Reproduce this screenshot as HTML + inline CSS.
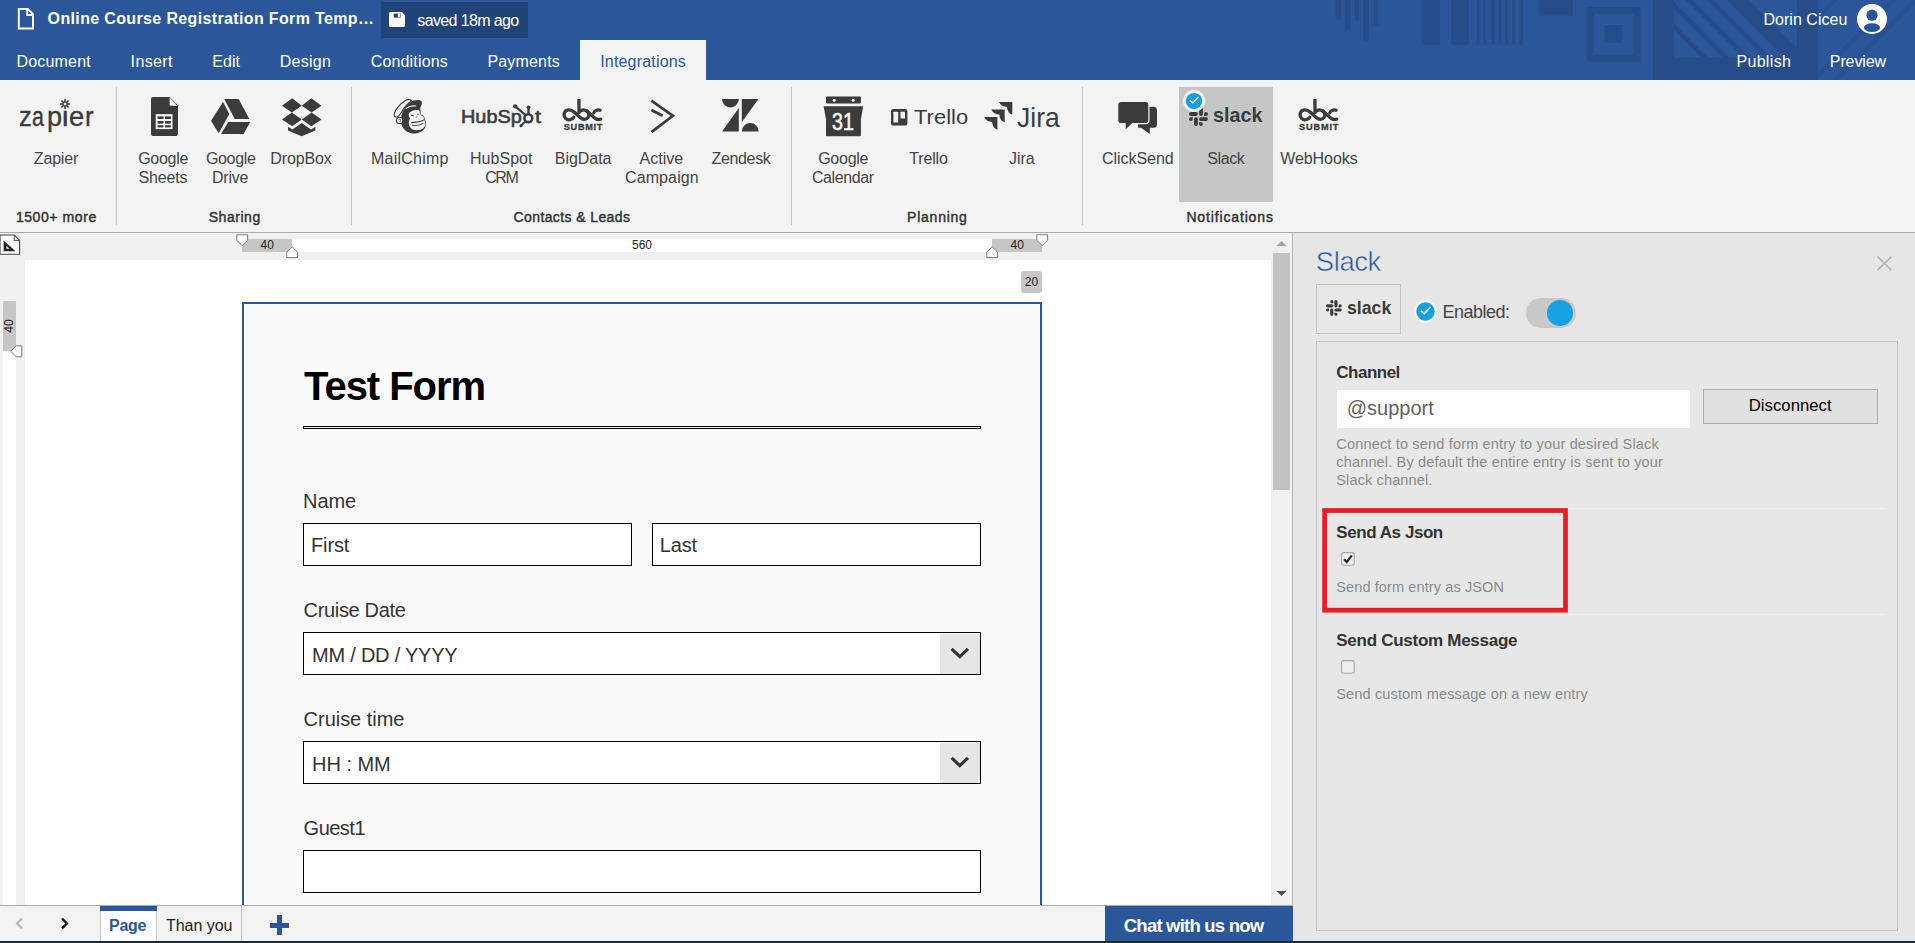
<!DOCTYPE html><html><head><meta charset="utf-8"><title>Form builder</title><style>
*{box-sizing:border-box;margin:0;padding:0}
html,body{width:1915px;height:943px;overflow:hidden;background:#f3f3f3;font-family:"Liberation Sans",sans-serif;}
.a{position:absolute}
.t{position:absolute;white-space:nowrap;line-height:1;}
svg{position:absolute;overflow:visible}
#hdr{left:0;top:0;width:1915px;height:80px;background:#2b579a;overflow:hidden}
#ribbon{left:0;top:80px;width:1915px;height:152px;background:#f3f3f3}
.sep{position:absolute;top:87px;width:1px;height:138px;background:#c4c4c4}
.ctr{position:absolute;white-space:nowrap;line-height:1;transform:translate(-50%,-50%);font-size:12px;color:#222}
</style></head><body>
<div id="hdr" class="a"><svg style="left:0;top:0" width="1915" height="80" viewBox="0 0 1915 80"><rect x="1335.7" y="0" width="5.4" height="19.6" fill="#264d8a"/><rect x="1345" y="0" width="5.5" height="29.5" fill="#264d8a"/><rect x="1354.5" y="0" width="4.5" height="20.4" fill="#264d8a"/><rect x="1363" y="0" width="6.0" height="40.7" fill="#264d8a"/><rect x="1373.7" y="0" width="4.6" height="24.8" fill="#264d8a"/><rect x="1421.5" y="0" width="18.4" height="44.6" fill="#264d8a"/><rect x="1451" y="0" width="17.8" height="44.6" fill="#264d8a"/><rect x="1476.7" y="0" width="3.0" height="44.6" fill="#264d8a"/><rect x="1483" y="0" width="3.0" height="44.6" fill="#264d8a"/><rect x="1490.8" y="0" width="3.9" height="44.6" fill="#264d8a"/><rect x="1498.6" y="0" width="3.1" height="44.6" fill="#264d8a"/><rect x="1504.9" y="0" width="3.1" height="44.6" fill="#264d8a"/><rect x="1512" y="0" width="3.0" height="44.6" fill="#264d8a"/><rect x="1519.3" y="0" width="3.6" height="44.6" fill="#264d8a"/><rect x="1538.5" y="0" width="34.5" height="15.7" fill="#264d8a"/><rect x="1586.5" y="7.2" width="54" height="54.5" fill="#264d8a"/><rect x="1593.5" y="14.2" width="40" height="40.5" fill="#2b579a"/><rect x="1604.4" y="25" width="17.8" height="17.6" fill="#264d8a"/><rect x="1653" y="0" width="165" height="80" fill="#264d8a"/><clipPath id="cpd"><rect x="1673.7" y="0" width="123" height="57.5"/></clipPath><g clip-path="url(#cpd)"><polygon points="1490,-10 1634,-10 1734,90 1590,90" fill="#2b579a"/><polygon points="1640.9,-10 1654.8,-10 1754.8,90 1740.9,90" fill="#2b579a"/><polygon points="1661.7,-10 1675.6,-10 1775.6,90 1761.7,90" fill="#2b579a"/><polygon points="1682.6,-10 1696.5,-10 1796.5,90 1782.6,90" fill="#2b579a"/><polygon points="1703.4,-10 1717.3,-10 1817.3,90 1803.4,90" fill="#2b579a"/><polygon points="1739,-10 1890,-10 1990,90 1839,90" fill="#2b579a"/></g><clipPath id="cpe"><rect x="1818" y="0" width="97" height="80"/></clipPath><g clip-path="url(#cpe)" opacity="0.55"><polygon points="1842,-10 1848,-10 1748,90 1742,90" fill="#264d8a"/><polygon points="1900,-10 1907,-10 1807,90 1800,90" fill="#264d8a"/><polygon points="1922,-10 1929,-10 1829,90 1822,90" fill="#264d8a"/></g></svg></div>
<div class="a" style="left:381px;top:2px;width:147px;height:36px;background:#214478"></div>
<div class="a" style="left:580px;top:40px;width:126px;height:40px;background:#f3f3f3"></div>
<div id="ribbon" class="a"></div>
<div class="a" style="left:0;top:232px;width:1915px;height:1px;background:#ababab"></div>
<div class="sep" style="left:116px"></div>
<div class="sep" style="left:351px"></div>
<div class="sep" style="left:791px"></div>
<div class="sep" style="left:1082px"></div>
<div class="a" style="left:1179px;top:87px;width:94px;height:115px;background:#c6c6c6"></div>
<div class="a" style="left:0;top:233px;width:1293px;height:673px;background:#f1f1f1"></div>
<div class="a" style="left:25px;top:260px;width:1246px;height:646px;background:#ffffff"></div>
<div class="a" style="left:242px;top:239px;width:800px;height:13px;background:#ffffff"></div>
<div class="a" style="left:242px;top:239px;width:50px;height:13px;background:#c6c6c6"></div>
<div class="a" style="left:992px;top:239px;width:50px;height:13px;background:#c6c6c6"></div>
<div class="a" style="left:2.5px;top:301px;width:13.5px;height:605px;background:#ffffff"></div>
<div class="a" style="left:2.5px;top:301px;width:13.5px;height:50px;background:#c6c6c6"></div>
<span class="ctr" style="left:267.2px;top:245px">40</span>
<span class="ctr" style="left:642px;top:245px">560</span>
<span class="ctr" style="left:1017.2px;top:245px">40</span>
<span class="ctr" style="left:8.8px;top:325.9px;transform:translate(-50%,-50%) rotate(-90deg)">40</span>
<div class="a" style="left:1021px;top:271px;width:21px;height:21.5px;background:#c6c6c6;border-radius:3px"></div>
<span class="ctr" style="left:1031.5px;top:282.2px">20</span>
<svg style="left:236px;top:234px" width="13" height="13" viewBox="0 0 13 13"><path d="M0.8 0.8 H11.6 V6.2 L6.2 11.8 L0.8 6.2 Z" fill="#fff" stroke="#7a7a7a" stroke-width="1"/></svg><svg style="left:1035.6px;top:234px" width="13" height="13" viewBox="0 0 13 13"><path d="M0.8 0.8 H11.6 V6.2 L6.2 11.8 L0.8 6.2 Z" fill="#fff" stroke="#7a7a7a" stroke-width="1"/></svg><svg style="left:285.8px;top:246px" width="13" height="13" viewBox="0 0 13 13"><path d="M0.8 11.6 H11.6 V6.2 L6.2 0.8 L0.8 6.2 Z" fill="#fff" stroke="#7a7a7a" stroke-width="1"/></svg><svg style="left:985.8px;top:246px" width="13" height="13" viewBox="0 0 13 13"><path d="M0.8 11.6 H11.6 V6.2 L6.2 0.8 L0.8 6.2 Z" fill="#fff" stroke="#7a7a7a" stroke-width="1"/></svg><svg style="left:9.5px;top:344.5px" width="13" height="13" viewBox="0 0 13 13"><path d="M11.8 0.8 V11.8 H6.2 L0.8 6.3 L6.2 0.8 Z" fill="#fff" stroke="#7a7a7a" stroke-width="1"/></svg><svg style="left:0;top:234px" width="21" height="21" viewBox="0 0 21 21"><path d="M0 1 H14.2 L19.6 6.4 V20.2 H0 Z" fill="#fff" stroke="#444" stroke-width="1.1"/><path d="M14.2 1 V6.4 H19.6" fill="none" stroke="#444" stroke-width="1"/><path d="M3.6 6.4 L15.6 17.2 H3.6 Z" fill="#222"/><path d="M6.4 12 L9.6 14.8 H6.4 Z" fill="#fff"/></svg>
<div class="a" style="left:242px;top:302px;width:800px;height:620px;background:#fafafa;border:2.2px solid #2b579a"></div>
<div class="a" style="left:303px;top:425.6px;width:678px;height:3.75px;background:#000"></div>
<div class="a" style="left:304.2px;top:426.85px;width:675.6px;height:1.25px;background:#fafafa"></div>
<div class="a" style="left:303.2px;top:523.2px;width:329px;height:42.8px;background:#fff;border:1.25px solid #000"></div>
<div class="a" style="left:652.2px;top:523.2px;width:329px;height:42.8px;background:#fff;border:1.25px solid #000"></div>
<div class="a" style="left:303.2px;top:632.3px;width:678px;height:42.8px;background:#fff;border:1.25px solid #000"></div>
<div class="a" style="left:303.2px;top:741.3px;width:678px;height:42.8px;background:#fff;border:1.25px solid #000"></div>
<div class="a" style="left:303.2px;top:850.3px;width:678px;height:42.8px;background:#fff;border:1.25px solid #000"></div>
<div class="a" style="left:939.7px;top:633.55px;width:40.2px;height:40.3px;background:#e6e6e6"></div>
<svg style="left:949px;top:646.3px" width="22" height="14" viewBox="0 0 22 14"><path d="M2.6 2.8 L10.8 10.6 L19 2.8" fill="none" stroke="#333" stroke-width="3.1"/></svg>
<div class="a" style="left:939.7px;top:742.55px;width:40.2px;height:40.3px;background:#e6e6e6"></div>
<svg style="left:949px;top:755.3px" width="22" height="14" viewBox="0 0 22 14"><path d="M2.6 2.8 L10.8 10.6 L19 2.8" fill="none" stroke="#333" stroke-width="3.1"/></svg>
<div class="a" style="left:1271px;top:233px;width:21px;height:673px;background:#f1f1f1"></div>
<div class="a" style="left:1273px;top:253px;width:17px;height:237px;background:#c1c1c1"></div>
<svg style="left:1276px;top:240px" width="11" height="7" viewBox="0 0 11 7"><path d="M0.5 6 L5.5 1 L10.5 6 Z" fill="#a3a3a3"/></svg>
<svg style="left:1276px;top:890px" width="11" height="7" viewBox="0 0 11 7"><path d="M0.5 1 L5.5 6 L10.5 1 Z" fill="#505050"/></svg>
<div class="a" style="left:0;top:905px;width:1293px;height:36px;background:#f3f3f3;border-top:1px solid #ababab"></div>
<div class="a" style="left:100px;top:906px;width:57px;height:35px;background:#fff;border-left:1px solid #c6c6c6;border-right:1px solid #c6c6c6"></div>
<div class="a" style="left:100px;top:906px;width:57px;height:5px;background:#2b579a"></div>
<div class="a" style="left:241px;top:906px;width:1px;height:35px;background:#c6c6c6"></div>
<svg style="left:14px;top:916px" width="12" height="15" viewBox="14 916 12 15"><path d="M22 918.5 L17.1 923.45 L22 928.4" fill="none" stroke="#b9b9b9" stroke-width="2.3"/></svg>
<svg style="left:58px;top:916px" width="12" height="15" viewBox="58 916 12 15"><path d="M62 918.5 L66.9 923.45 L62 928.4" fill="none" stroke="#111" stroke-width="2.3"/></svg>
<div class="a" style="left:269.8px;top:922.5px;width:19.6px;height:5px;background:#2b579a"></div>
<div class="a" style="left:277.1px;top:915.4px;width:5px;height:19.2px;background:#2b579a"></div>
<div class="a" style="left:1292px;top:233px;width:623px;height:710px;background:#e6e6e6;border-left:1px solid #b5b5b5"></div>
<div class="a" style="left:1316px;top:284px;width:85px;height:49.5px;border:1px solid #c2c2c2;background:#e8e8e8"></div>
<div class="a" style="left:1316px;top:341px;width:582px;height:590px;border:1px solid #c2c2c2;background:#e7e7e7"></div>
<div class="a" style="left:1336.8px;top:390.2px;width:353.2px;height:37.5px;background:#fff"></div>
<div class="a" style="left:1703px;top:389px;width:175px;height:35px;background:#e1e1e1;border:1px solid #adadad"></div>
<div class="a" style="left:1336px;top:508.3px;width:550px;height:1px;background:#efefef"></div>
<div class="a" style="left:1336px;top:613.8px;width:550px;height:1px;background:#efefef"></div>
<svg style="left:1320px;top:506px" width="250" height="109" viewBox="1320 506 250 109"><rect x="1324.6" y="510.5" width="240.9" height="99.7" fill="none" stroke="#ea1c24" stroke-width="4.75"/></svg>
<div class="a" style="left:1525.8px;top:297.9px;width:50.1px;height:30.5px;border-radius:16px;background:#c9c9c9"></div>
<div class="a" style="left:1547.1px;top:300.1px;width:26px;height:26px;border-radius:13px;background:#15a1e3"></div>
<svg style="left:1326px;top:299.9px" width="15.8" height="15.8" viewBox="0 0 54 54"><path d="M19.712.133a5.381 5.381 0 0 0-5.376 5.387 5.381 5.381 0 0 0 5.376 5.386h5.376V5.52A5.381 5.381 0 0 0 19.712.133m0 14.365H5.376A5.381 5.381 0 0 0 0 19.884a5.381 5.381 0 0 0 5.376 5.387h14.336a5.381 5.381 0 0 0 5.376-5.387 5.381 5.381 0 0 0-5.376-5.386M53.76 19.884a5.381 5.381 0 0 0-5.376-5.386 5.381 5.381 0 0 0-5.376 5.386v5.387h5.376a5.381 5.381 0 0 0 5.376-5.387m-14.336 0V5.52A5.381 5.381 0 0 0 34.048.133a5.381 5.381 0 0 0-5.376 5.387v14.364a5.381 5.381 0 0 0 5.376 5.387 5.381 5.381 0 0 0 5.376-5.387M34.048 54a5.381 5.381 0 0 0 5.376-5.387 5.381 5.381 0 0 0-5.376-5.386h-5.376v5.386A5.381 5.381 0 0 0 34.048 54m0-14.365h14.336a5.381 5.381 0 0 0 5.376-5.386 5.381 5.381 0 0 0-5.376-5.387H34.048a5.381 5.381 0 0 0-5.376 5.387 5.381 5.381 0 0 0 5.376 5.386M0 34.249a5.381 5.381 0 0 0 5.376 5.386 5.381 5.381 0 0 0 5.376-5.386v-5.387H5.376A5.381 5.381 0 0 0 0 34.25m14.336-.001v14.364A5.381 5.381 0 0 0 19.712 54a5.381 5.381 0 0 0 5.376-5.387V34.25a5.381 5.381 0 0 0-5.376-5.387 5.381 5.381 0 0 0-5.376 5.387" fill="#3b3b3b"/></svg><svg style="left:1413.9px;top:299.6px" width="23.0" height="23.0" viewBox="-11.5 -11.5 23.0 23.0"><circle r="11.5" fill="#f6f6f6"/><circle r="9.2" fill="#14a0e3"/><path d="M-4.54 -0.57 L-1.25 2.16 L5.11 -4.43" fill="none" stroke="#fff" stroke-width="1.59"/></svg><svg style="left:1877px;top:256px" width="15" height="15" viewBox="0 0 15 15"><path d="M0.6 0.6 L14.4 14.2 M14.4 0.6 L0.6 14.2" stroke="#b4b4b4" stroke-width="1.7" fill="none"/></svg><svg style="left:1341px;top:552px" width="14" height="14" viewBox="0 0 14 14"><rect x="0.6" y="0.6" width="12.6" height="12.6" rx="2.2" fill="#efefef" stroke="#a6a6a6" stroke-width="1.1"/><path d="M3 7.2 L5.8 10 L10.8 3.4" fill="none" stroke="#2a2a2a" stroke-width="2.2"/></svg><svg style="left:1341px;top:660.3px" width="14" height="14" viewBox="0 0 14 14"><rect x="0.6" y="0.6" width="12.6" height="12.6" rx="2.2" fill="#efefef" stroke="#a6a6a6" stroke-width="1.1"/></svg>
<div class="a" style="left:1105.4px;top:905.5px;width:187.4px;height:35.5px;background:#2b579a"></div>
<div class="a" style="left:0;top:941px;width:1915px;height:2px;background:#1f2c38"></div>
<svg style="left:17px;top:8px" width="18" height="22" viewBox="0 0 18 22"><path d="M1.8 1.05 H10.9 L16 6.2 V20.5 H1.8 Z M10.2 1.4 V7 H15.8" fill="none" stroke="#fff" stroke-width="1.9" stroke-linejoin="miter"/></svg><svg style="left:389px;top:12px" width="16" height="15" viewBox="0 0 16 15"><path d="M1.5 0.1 H12.8 L16 3.2 V13.6 Q16 15 14.6 15 H1.5 Q0 15 0 13.6 V1.5 Q0 0.1 1.5 0.1 Z" fill="#fff"/><rect x="4.8" y="1.6" width="7" height="4" fill="#214478"/><rect x="8.9" y="1.6" width="2.5" height="3.4" fill="#fff"/></svg><svg style="left:1857px;top:4px" width="30" height="30" viewBox="0 0 30 30"><circle cx="15" cy="15" r="15" fill="#fff"/><circle cx="15" cy="11.2" r="5.6" fill="#2b579a"/><ellipse cx="15" cy="23.6" rx="8.2" ry="4.3" fill="#2b579a"/></svg>
<svg style="left:58.9px;top:97.8px" width="12" height="12" viewBox="-6 -6 12 12"><line x1="-5" y1="0" x2="5" y2="0" stroke="#3b3b3b" stroke-width="1.6" transform="rotate(0)"/><line x1="-5" y1="0" x2="5" y2="0" stroke="#3b3b3b" stroke-width="1.6" transform="rotate(45)"/><line x1="-5" y1="0" x2="5" y2="0" stroke="#3b3b3b" stroke-width="1.6" transform="rotate(90)"/><line x1="-5" y1="0" x2="5" y2="0" stroke="#3b3b3b" stroke-width="1.6" transform="rotate(135)"/><circle r="1.3" fill="#f3f3f3"/></svg><svg style="left:151px;top:96.8px" width="27" height="39" viewBox="0 0 27 39"><path d="M2 0 H18.6 L27 8.6 V37 Q27 39 25 39 H2 Q0 39 0 37 V2 Q0 0 2 0 Z" fill="#3b3b3b"/><path d="M18.6 0.6 L26.4 8.8 H20 Q18.6 8.8 18.6 7.4 Z" fill="#f3f3f3"/><rect x="4.7" y="17.1" width="16.8" height="15" fill="#f3f3f3"/><rect x="6.6" y="19.4" width="5.8" height="2.6" fill="#3b3b3b"/><rect x="6.6" y="24.0" width="5.8" height="2.6" fill="#3b3b3b"/><rect x="6.6" y="28.2" width="5.8" height="2.2" fill="#3b3b3b"/><rect x="14.0" y="19.4" width="5.8" height="2.6" fill="#3b3b3b"/><rect x="14.0" y="24.0" width="5.8" height="2.6" fill="#3b3b3b"/><rect x="14.0" y="28.2" width="5.8" height="2.2" fill="#3b3b3b"/></svg><svg style="left:210.9px;top:99px" width="40" height="35" viewBox="0 0 40 35"><polygon points="12.1,2.9 0,21.7 7.7,34.2 18.3,15.1" fill="#3b3b3b"/><polygon points="17.2,23 39.2,23 32.6,34.9 10.1,34.9" fill="#3b3b3b"/><polygon points="13.2,0 27.6,0 38.4,20.1 23.8,20.1" fill="#3b3b3b"/></svg><svg style="left:281.9px;top:97.9px" width="40" height="39" viewBox="0 0 40 39"><polygon points="0,7.8 10.2,0.3 19.7,7.8 9.9,14.6" fill="#3b3b3b"/><polygon points="19.7,7.8 29.3,0.3 39.5,7.8 29.6,14.6" fill="#3b3b3b"/><polygon points="0,21.5 9.9,14.6 19.7,21.5 10.2,28.3" fill="#3b3b3b"/><polygon points="19.7,21.5 29.6,14.6 39.5,21.5 29.3,28.3" fill="#3b3b3b"/><polygon points="6,28.8 10.4,31.4 19.7,25 29.1,31.4 33.4,28.8 33.4,32.5 19.7,38.2 6,32.5" fill="#3b3b3b"/></svg><svg style="left:380px;top:92px" width="60" height="48" viewBox="0 0 1179 943"><path d="M600,200 C660,160 760,140 810,175 C840,205 815,270 790,305 C795,360 800,420 810,445 C850,455 880,480 880,540 C910,580 915,640 885,700 C840,780 720,830 620,812 C520,795 440,720 425,640 C405,560 410,450 450,380 C490,300 540,240 600,200 Z" fill="#3b3b3b"/><path d="M565,430 C590,375 700,340 770,360 C790,400 790,440 815,465 C850,470 872,500 868,548 C900,590 900,650 868,695 C830,745 730,765 655,742 C600,722 560,660 565,590 C575,555 590,535 588,510 C570,490 560,460 565,430 Z" fill="#f3f3f3"/><path d="M278,455 C275,380 380,230 520,158 C560,138 600,140 618,178 C560,215 480,300 430,385 C400,430 380,470 340,490 C305,498 282,485 278,455 Z" fill="#f3f3f3" stroke="#3b3b3b" stroke-width="22" stroke-linejoin="round"/><circle cx="385" cy="558" r="62" fill="#f3f3f3" stroke="#3b3b3b" stroke-width="22"/><path d="M365,548 C375,520 412,528 405,560 C400,575 395,580 400,595" fill="none" stroke="#3b3b3b" stroke-width="14"/><path d="M612,603 C690,600 790,590 866,545" fill="none" stroke="#3b3b3b" stroke-width="24"/><path d="M628,655 C700,668 790,655 856,612" fill="none" stroke="#3b3b3b" stroke-width="18"/><path d="M608,458 L665,468" fill="none" stroke="#3b3b3b" stroke-width="22"/><circle cx="748" cy="436" r="14" fill="#3b3b3b"/><path d="M705,495 L735,490" fill="none" stroke="#3b3b3b" stroke-width="14"/><path d="M515,322 C560,285 620,265 700,275" fill="none" stroke="#f3f3f3" stroke-width="24" stroke-linecap="round"/></svg><svg style="left:380px;top:90px" width="180" height="52" viewBox="0 0 1915 553"><circle cx="1578" cy="300" r="42" fill="none" stroke="#3b3b3b" stroke-width="28"/><line x1="1580" y1="190" x2="1580" y2="258" stroke="#3b3b3b" stroke-width="24"/><circle cx="1580" cy="184" r="20" fill="#3b3b3b"/><line x1="1442" y1="178" x2="1546" y2="264" stroke="#3b3b3b" stroke-width="24"/><circle cx="1438" cy="174" r="23" fill="#3b3b3b"/><line x1="1503" y1="376" x2="1547" y2="334" stroke="#3b3b3b" stroke-width="22"/><circle cx="1500" cy="380" r="17" fill="#3b3b3b"/></svg><svg style="left:554px;top:92.2px" width="60" height="44" viewBox="0 0 1286 943"><path d="M 425,540 C 395,600 300,615 250,565 C 190,505 215,395 305,385 C 375,378 410,410 450,445 L 560,545 C 620,600 700,600 735,540 C 768,478 728,392 650,386 C 600,382 560,402 535,440" fill="none" stroke="#3b3b3b" stroke-width="70" stroke-linejoin="round" stroke-linecap="round"/><path d="M 535,150 L 535,440" fill="none" stroke="#3b3b3b" stroke-width="70" stroke-linejoin="round" stroke-linecap="butt"/><path d="M 700,402 L 860,548 C 900,585 950,608 1000,582" fill="none" stroke="#3b3b3b" stroke-width="70" stroke-linejoin="round" stroke-linecap="round"/><path d="M 990,390 C 940,368 875,394 852,446" fill="none" stroke="#3b3b3b" stroke-width="70" stroke-linejoin="round" stroke-linecap="round"/></svg><svg style="left:1290px;top:92px" width="60" height="44" viewBox="0 0 1286 943"><path d="M 425,540 C 395,600 300,615 250,565 C 190,505 215,395 305,385 C 375,378 410,410 450,445 L 560,545 C 620,600 700,600 735,540 C 768,478 728,392 650,386 C 600,382 560,402 535,440" fill="none" stroke="#3b3b3b" stroke-width="70" stroke-linejoin="round" stroke-linecap="round"/><path d="M 535,150 L 535,440" fill="none" stroke="#3b3b3b" stroke-width="70" stroke-linejoin="round" stroke-linecap="butt"/><path d="M 700,402 L 860,548 C 900,585 950,608 1000,582" fill="none" stroke="#3b3b3b" stroke-width="70" stroke-linejoin="round" stroke-linecap="round"/><path d="M 990,390 C 940,368 875,394 852,446" fill="none" stroke="#3b3b3b" stroke-width="70" stroke-linejoin="round" stroke-linecap="round"/></svg><svg style="left:640px;top:90px" width="50" height="52" viewBox="640 90 50 52"><path d="M651.4,100.6 L672.9,115.9 L651.4,132.2" fill="none" stroke="#3b3b3b" stroke-width="2.7" stroke-linejoin="miter"/><path d="M651.4,110.0 L662.6,115.7" fill="none" stroke="#3b3b3b" stroke-width="2.7"/></svg><svg style="left:722px;top:99px" width="37" height="33" viewBox="0 0 37 33"><path d="M0,0 H16.8 A8.4,8.4 0 0 1 0,0 Z" fill="#3b3b3b"/><polygon points="19.8,0 36.4,0 19.8,23.2" fill="#3b3b3b"/><polygon points="16.8,9 16.8,32.4 0,32.4" fill="#3b3b3b"/><path d="M19.8,32.4 A8.45,8.45 0 0 1 36.7,32.4 Z" fill="#3b3b3b"/></svg><svg style="left:820px;top:90px" width="50" height="52" viewBox="820 90 50 52"><rect x="826" y="96.5" width="34.9" height="7.1" rx="0.8" fill="#3b3b3b"/><circle cx="834.2" cy="100.2" r="1.5" fill="#f3f3f3"/><circle cx="853.2" cy="100.2" r="1.5" fill="#f3f3f3"/><path d="M823.6,106.2 H863.2 L860.9,119.2 V135.2 Q860.9,136.2 859.9,136.2 H827 Q826,136.2 826,135.2 V119.2 Z" fill="#3b3b3b"/></svg><svg style="left:891.1px;top:109px" width="16.4" height="16.6" viewBox="0 0 16.4 16.6"><rect width="16.4" height="16.6" rx="2.2" fill="#3b3b3b"/><rect x="2.4" y="2.7" width="4.8" height="10.9" rx="0.5" fill="#f3f3f3"/><rect x="9.5" y="2.7" width="4.5" height="6.8" rx="0.5" fill="#f3f3f3"/></svg><svg style="left:980px;top:95px" width="40" height="40" viewBox="980 95 40 40"><path d="M999.00,101.90 L1012.30,101.90 L1012.30,114.54 C1008.98,113.87 1007.25,110.55 1006.98,106.95 C1003.65,106.69 1000.33,105.23 999.00,101.90 Z" fill="#3b3b3b"/><path d="M991.30,109.40 L1004.70,109.40 L1004.70,122.13 C1001.35,121.46 999.61,118.11 999.34,114.49 C995.99,114.22 992.64,112.75 991.30,109.40 Z" fill="#3b3b3b"/><path d="M984.20,116.90 L997.40,116.90 L997.40,129.44 C994.10,128.78 992.38,125.48 992.12,121.92 C988.82,121.65 985.52,120.20 984.20,116.90 Z" fill="#3b3b3b"/></svg><svg style="left:1110px;top:95px" width="55" height="45" viewBox="1110 95 55 45"><path d="M1138,106.7 H1153.5 Q1157,106.7 1157,110.2 V124.3 Q1157,127.8 1153.5,127.8 H1149.8 V134 L1141,127.8 H1138 Z" fill="#3b3b3b"/><path d="M1121.2,101.3 H1145.4 Q1148.9,101.3 1148.9,104.8 V120.2 Q1148.9,123.7 1145.4,123.7 H1132.6 L1125.1,130.6 V123.7 H1121.2 Q1117.7,123.7 1117.7,120.2 V104.8 Q1117.7,101.3 1121.2,101.3 Z" fill="#3b3b3b" stroke="#f3f3f3" stroke-width="1.2"/></svg><svg style="left:1188.9px;top:106.6px" width="19" height="19" viewBox="0 0 54 54"><path d="M19.712.133a5.381 5.381 0 0 0-5.376 5.387 5.381 5.381 0 0 0 5.376 5.386h5.376V5.52A5.381 5.381 0 0 0 19.712.133m0 14.365H5.376A5.381 5.381 0 0 0 0 19.884a5.381 5.381 0 0 0 5.376 5.387h14.336a5.381 5.381 0 0 0 5.376-5.387 5.381 5.381 0 0 0-5.376-5.386M53.76 19.884a5.381 5.381 0 0 0-5.376-5.386 5.381 5.381 0 0 0-5.376 5.386v5.387h5.376a5.381 5.381 0 0 0 5.376-5.387m-14.336 0V5.52A5.381 5.381 0 0 0 34.048.133a5.381 5.381 0 0 0-5.376 5.387v14.364a5.381 5.381 0 0 0 5.376 5.387 5.381 5.381 0 0 0 5.376-5.387M34.048 54a5.381 5.381 0 0 0 5.376-5.387 5.381 5.381 0 0 0-5.376-5.386h-5.376v5.386A5.381 5.381 0 0 0 34.048 54m0-14.365h14.336a5.381 5.381 0 0 0 5.376-5.386 5.381 5.381 0 0 0-5.376-5.387H34.048a5.381 5.381 0 0 0-5.376 5.387 5.381 5.381 0 0 0 5.376 5.386M0 34.249a5.381 5.381 0 0 0 5.376 5.386 5.381 5.381 0 0 0 5.376-5.386v-5.387H5.376A5.381 5.381 0 0 0 0 34.25m14.336-.001v14.364A5.381 5.381 0 0 0 19.712 54a5.381 5.381 0 0 0 5.376-5.387V34.25a5.381 5.381 0 0 0-5.376-5.387 5.381 5.381 0 0 0-5.376 5.387" fill="#3b3b3b"/></svg><svg style="left:1182.6px;top:89.8px" width="22" height="22" viewBox="-11 -11 22 22"><circle r="11" fill="#f6f6f6"/><circle r="8.1" fill="#14a0e3"/><path d="M-4.00 -0.50 L-1.10 1.90 L4.50 -3.90" fill="none" stroke="#fff" stroke-width="1.40"/></svg>
<span class="t" style="left:47.60px;top:11px;font-size:16px;letter-spacing:0.358px;color:#ffffff;font-weight:700;">Online Course Registration Form Temp…</span>
<span class="t" style="left:417.30px;top:13px;font-size:16px;letter-spacing:-0.634px;color:#ffffff;">saved 18m ago</span>
<span class="t" style="left:16.50px;top:54px;font-size:16px;letter-spacing:0.189px;color:#ffffff;">Document</span>
<span class="t" style="left:130.60px;top:54px;font-size:16px;letter-spacing:0.366px;color:#ffffff;">Insert</span>
<span class="t" style="left:212.20px;top:54px;font-size:16px;letter-spacing:0.092px;color:#ffffff;">Edit</span>
<span class="t" style="left:279.80px;top:54px;font-size:16px;letter-spacing:0.259px;color:#ffffff;">Design</span>
<span class="t" style="left:370.70px;top:54px;font-size:16px;letter-spacing:0.166px;color:#ffffff;">Conditions</span>
<span class="t" style="left:487.40px;top:54px;font-size:16px;letter-spacing:0.180px;color:#ffffff;">Payments</span>
<span class="t" style="left:600.20px;top:54px;font-size:16px;letter-spacing:0.181px;color:#2b579a;">Integrations</span>
<span class="t" style="left:1763.40px;top:12px;font-size:16px;letter-spacing:0.041px;color:#ffffff;">Dorin Ciceu</span>
<span class="t" style="left:1736.40px;top:54px;font-size:16px;letter-spacing:0.337px;color:#ffffff;">Publish</span>
<span class="t" style="left:1829.80px;top:54px;font-size:16px;letter-spacing:-0.092px;color:#ffffff;">Preview</span>
<span class="t" style="left:33.80px;top:151px;font-size:16px;letter-spacing:-0.165px;color:#444444;">Zapier</span>
<span class="t" style="left:138.20px;top:151px;font-size:16px;letter-spacing:-0.299px;color:#444444;">Google</span>
<span class="t" style="left:138.60px;top:170px;font-size:16px;letter-spacing:-0.202px;color:#444444;">Sheets</span>
<span class="t" style="left:205.90px;top:151px;font-size:16px;letter-spacing:-0.319px;color:#444444;">Google</span>
<span class="t" style="left:212.00px;top:170px;font-size:16px;letter-spacing:-0.234px;color:#444444;">Drive</span>
<span class="t" style="left:270.30px;top:151px;font-size:16px;letter-spacing:-0.125px;color:#444444;">DropBox</span>
<span class="t" style="left:371.00px;top:151px;font-size:16px;letter-spacing:0.229px;color:#444444;">MailChimp</span>
<span class="t" style="left:470.00px;top:151px;font-size:16px;letter-spacing:0.030px;color:#444444;">HubSpot</span>
<span class="t" style="left:485.20px;top:170px;font-size:16px;letter-spacing:-1.405px;color:#444444;">CRM</span>
<span class="t" style="left:554.80px;top:151px;font-size:16px;letter-spacing:-0.037px;color:#444444;">BigData</span>
<span class="t" style="left:639.60px;top:151px;font-size:16px;letter-spacing:0.006px;color:#444444;">Active</span>
<span class="t" style="left:625.00px;top:170px;font-size:16px;letter-spacing:0.110px;color:#444444;">Campaign</span>
<span class="t" style="left:711.60px;top:151px;font-size:16px;letter-spacing:-0.361px;color:#444444;">Zendesk</span>
<span class="t" style="left:818.20px;top:151px;font-size:16px;letter-spacing:-0.259px;color:#444444;">Google</span>
<span class="t" style="left:811.90px;top:170px;font-size:16px;letter-spacing:-0.400px;color:#444444;">Calendar</span>
<span class="t" style="left:909.30px;top:151px;font-size:16px;letter-spacing:-0.163px;color:#444444;">Trello</span>
<span class="t" style="left:1009.00px;top:151px;font-size:16px;letter-spacing:-0.028px;color:#444444;">Jira</span>
<span class="t" style="left:1102.00px;top:151px;font-size:16px;letter-spacing:-0.042px;color:#444444;">ClickSend</span>
<span class="t" style="left:1207.20px;top:151px;font-size:16px;letter-spacing:-0.381px;color:#444444;">Slack</span>
<span class="t" style="left:1280.20px;top:151px;font-size:16px;letter-spacing:-0.066px;color:#444444;">WebHooks</span>
<span class="t" style="left:15.90px;top:210px;font-size:14px;letter-spacing:0.576px;color:#333333;-webkit-text-stroke:0.45px #333333;">1500+ more</span>
<span class="t" style="left:208.70px;top:210px;font-size:14px;letter-spacing:0.539px;color:#333333;-webkit-text-stroke:0.45px #333333;">Sharing</span>
<span class="t" style="left:513.50px;top:210px;font-size:14px;letter-spacing:0.399px;color:#333333;-webkit-text-stroke:0.45px #333333;">Contacts &amp; Leads</span>
<span class="t" style="left:907.10px;top:210px;font-size:14px;letter-spacing:0.757px;color:#333333;-webkit-text-stroke:0.45px #333333;">Planning</span>
<span class="t" style="left:1186.40px;top:210px;font-size:14px;letter-spacing:0.854px;color:#333333;-webkit-text-stroke:0.45px #333333;">Notifications</span>
<span class="t" style="left:304.10px;top:366px;font-size:40px;letter-spacing:-1.066px;color:#000000;font-weight:700;">Test Form</span>
<span class="t" style="left:303.10px;top:491px;font-size:20px;letter-spacing:-0.142px;color:#333333;">Name</span>
<span class="t" style="left:311.00px;top:535px;font-size:20px;letter-spacing:-0.130px;color:#333333;">First</span>
<span class="t" style="left:659.70px;top:535px;font-size:20px;letter-spacing:-0.115px;color:#333333;">Last</span>
<span class="t" style="left:303.60px;top:600px;font-size:20px;letter-spacing:-0.337px;color:#333333;">Cruise Date</span>
<span class="t" style="left:312.10px;top:645px;font-size:20px;letter-spacing:-0.236px;color:#333333;">MM / DD / YYYY</span>
<span class="t" style="left:303.60px;top:709px;font-size:20px;letter-spacing:-0.031px;color:#333333;">Cruise time</span>
<span class="t" style="left:312.10px;top:754px;font-size:20px;letter-spacing:-0.036px;color:#333333;">HH : MM</span>
<span class="t" style="left:303.60px;top:818px;font-size:20px;letter-spacing:-0.512px;color:#333333;">Guest1</span>
<span class="t" style="left:1315.80px;top:248px;font-size:27.5px;letter-spacing:-0.424px;color:#2b579a;-webkit-text-stroke:0.5px #e6e6e6;">Slack</span>
<span class="t" style="left:1442.50px;top:303px;font-size:18px;letter-spacing:-0.523px;color:#444444;">Enabled:</span>
<span class="t" style="left:1336.30px;top:364px;font-size:17px;letter-spacing:-0.506px;color:#333333;font-weight:700;">Channel</span>
<span class="t" style="left:1346.70px;top:398px;font-size:20px;letter-spacing:0.006px;color:#626262;">@support</span>
<span class="t" style="left:1336.30px;top:437px;font-size:14.5px;letter-spacing:0.173px;color:#8a8a8a;">Connect to send form entry to your desired Slack</span>
<span class="t" style="left:1336.30px;top:455px;font-size:14.5px;letter-spacing:0.160px;color:#8a8a8a;">channel. By default the entire entry is sent to your</span>
<span class="t" style="left:1336.30px;top:473px;font-size:14.5px;letter-spacing:0.132px;color:#8a8a8a;">Slack channel.</span>
<span class="t" style="left:1748.70px;top:398px;font-size:16.67px;letter-spacing:0.059px;color:#000000;">Disconnect</span>
<span class="t" style="left:1336.30px;top:524px;font-size:17px;letter-spacing:-0.439px;color:#333333;font-weight:700;">Send As Json</span>
<span class="t" style="left:1336.30px;top:580px;font-size:14.5px;letter-spacing:0.108px;color:#8a8a8a;">Send form entry as JSON</span>
<span class="t" style="left:1336.30px;top:632px;font-size:17px;letter-spacing:-0.275px;color:#333333;font-weight:700;">Send Custom Message</span>
<span class="t" style="left:1336.30px;top:687px;font-size:14.5px;letter-spacing:0.146px;color:#8a8a8a;">Send custom message on a new entry</span>
<span class="t" style="left:109.00px;top:918px;font-size:16px;letter-spacing:-0.248px;color:#2b579a;font-weight:700;">Page</span>
<span class="t" style="left:166.00px;top:918px;font-size:16px;letter-spacing:-0.045px;color:#222222;">Than you</span>
<span class="t" style="left:1123.80px;top:917px;font-size:18.5px;letter-spacing:-0.787px;color:#ffffff;font-weight:700;">Chat with us now</span>
<span class="t" style="left:18.85px;top:104px;font-size:27px;letter-spacing:0.000px;color:#3b3b3b;-webkit-text-stroke:0.35px #3b3b3b;transform-origin:0 0;transform:scaleX(0.950);">z</span>
<span class="t" style="left:32.01px;top:104px;font-size:27px;letter-spacing:0.000px;color:#3b3b3b;-webkit-text-stroke:0.35px #3b3b3b;transform-origin:0 0;transform:scaleX(0.793);">a</span>
<span class="t" style="left:46.90px;top:104px;font-size:27px;letter-spacing:0.000px;color:#3b3b3b;-webkit-text-stroke:0.35px #3b3b3b;transform-origin:0 0;transform:scaleX(1.000);">p</span>
<span class="t" style="left:61.03px;top:104px;font-size:27px;letter-spacing:0.000px;color:#3b3b3b;-webkit-text-stroke:0.35px #3b3b3b;transform-origin:0 0;transform:scaleX(1.133);">ı</span>
<span class="t" style="left:69.18px;top:104px;font-size:27px;letter-spacing:0.000px;color:#3b3b3b;-webkit-text-stroke:0.35px #3b3b3b;transform-origin:0 0;transform:scaleX(1.015);">e</span>
<span class="t" style="left:85.45px;top:104px;font-size:27px;letter-spacing:0.000px;color:#3b3b3b;-webkit-text-stroke:0.35px #3b3b3b;transform-origin:0 0;transform:scaleX(0.950);">r</span>
<span class="t" style="left:460.56px;top:107px;font-size:19.2px;letter-spacing:0.000px;color:#3b3b3b;-webkit-text-stroke:0.6px #3b3b3b;transform-origin:0 0;transform:scaleX(1.035);">HubSp</span>
<span class="t" style="left:535.10px;top:107px;font-size:19.2px;letter-spacing:0.000px;color:#3b3b3b;-webkit-text-stroke:0.55px #3b3b3b;transform-origin:0 0;transform:scaleX(1.133);">t</span>
<span class="t" style="left:563.80px;top:123px;font-size:9.2px;letter-spacing:0.679px;color:#3b3b3b;font-weight:700;-webkit-text-stroke:0.3px #3b3b3b;">SUBMIT</span>
<span class="t" style="left:1299.10px;top:123px;font-size:9.2px;letter-spacing:0.819px;color:#3b3b3b;font-weight:700;-webkit-text-stroke:0.3px #3b3b3b;">SUBMIT</span>
<span class="t" style="left:832.40px;top:111px;font-size:23.7px;letter-spacing:0.000px;color:#f3f3f3;-webkit-text-stroke:0.6px #f3f3f3;transform-origin:0 0;transform:scaleX(0.829);">31</span>
<span class="t" style="left:913.90px;top:108px;font-size:19.3px;letter-spacing:0.000px;color:#3b3b3b;transform-origin:0 0;transform:scaleX(1.140);">Trello</span>
<span class="t" style="left:1017.10px;top:104px;font-size:27.5px;letter-spacing:0.000px;color:#3b3b3b;transform-origin:0 0;transform:scaleX(0.964);">Jira</span>
<span class="t" style="left:1213.40px;top:106px;font-size:19.6px;letter-spacing:0.000px;color:#3b3b3b;font-weight:700;transform-origin:0 0;transform:scaleX(1.007);">slack</span>
<span class="t" style="left:1346.80px;top:300px;font-size:17.5px;letter-spacing:0.000px;color:#3b3b3b;font-weight:700;transform-origin:0 0;transform:scaleX(1.010);">slack</span>
</body></html>
